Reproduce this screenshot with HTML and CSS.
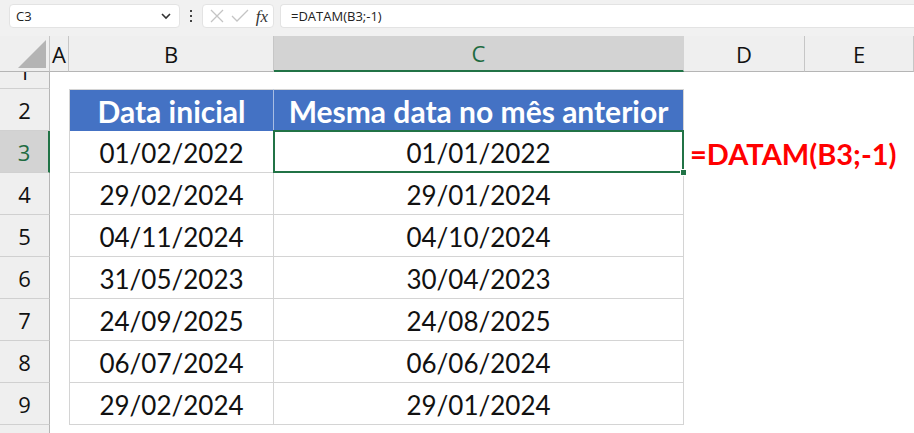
FILE: index.html
```html
<!DOCTYPE html>
<html lang="pt">
<head>
<meta charset="utf-8">
<link rel="stylesheet" href="styles.css">
</head>
<body>
<div class="app">
  <div class="toolbar">
    <div class="namebox">
      <span class="ref">C3</span>
      <svg class="chev" width="12" height="8" viewBox="0 0 12 8"><path d="M2 2 L6 6 L10 2" fill="none" stroke="#333" stroke-width="1.6"/></svg>
    </div>
    <div class="dots"><i></i><i></i><i></i></div>
    <div class="fxbox">
      <svg width="16" height="16" viewBox="0 0 16 16"><path d="M2 2 L14 14 M14 2 L2 14" stroke="#c4c4c4" stroke-width="1.3" fill="none"/></svg>
      <svg width="18" height="16" viewBox="0 0 18 16"><path d="M1 8 L6 13 L17 2" stroke="#c4c4c4" stroke-width="1.3" fill="none"/></svg>
      <span class="fx">fx</span>
    </div>
    <div class="formula">=DATAM(B3;-1)</div>
  </div>
  <div class="sheet">
    <div class="corner"><span class="tri"></span></div>
    <div class="ch">A</div>
    <div class="ch">B</div>
    <div class="ch sel">C</div>
    <div class="ch">D</div>
    <div class="ch">E</div>

    <div class="rh r1"><span>1</span></div>
    <div class="c"></div><div class="c"></div><div class="c"></div><div class="c"></div><div class="c"></div>

    <div class="rh">2</div>
    <div class="c"></div>
    <div class="th first">Data inicial</div>
    <div class="th">Mesma data no mês anterior</div>
    <div class="c"></div><div class="c"></div>

    <div class="rh sel">3</div>
    <div class="c"></div>
    <div class="td first">01/02/2022</div>
    <div class="td active">01/01/2022<span class="selbox"></span><span class="handle"></span></div>
    <div class="c note">=DATAM(B3;-1)</div>
    <div class="c"></div>

    <div class="rh">4</div>
    <div class="c"></div>
    <div class="td first">29/02/2024</div>
    <div class="td">29/01/2024</div>
    <div class="c"></div><div class="c"></div>

    <div class="rh">5</div>
    <div class="c"></div>
    <div class="td first">04/11/2024</div>
    <div class="td">04/10/2024</div>
    <div class="c"></div><div class="c"></div>

    <div class="rh">6</div>
    <div class="c"></div>
    <div class="td first">31/05/2023</div>
    <div class="td">30/04/2023</div>
    <div class="c"></div><div class="c"></div>

    <div class="rh">7</div>
    <div class="c"></div>
    <div class="td first">24/09/2025</div>
    <div class="td">24/08/2025</div>
    <div class="c"></div><div class="c"></div>

    <div class="rh">8</div>
    <div class="c"></div>
    <div class="td first">06/07/2024</div>
    <div class="td">06/06/2024</div>
    <div class="c"></div><div class="c"></div>

    <div class="rh">9</div>
    <div class="c"></div>
    <div class="td first">29/02/2024</div>
    <div class="td">29/01/2024</div>
    <div class="c"></div><div class="c"></div>

    <div class="rh last"></div>
    <div class="c"></div><div class="c"></div><div class="c"></div><div class="c"></div><div class="c"></div>
  </div>
</div>
</body>
</html>
```

FILE: styles.css
```css
* { box-sizing: border-box; }
html, body { margin: 0; padding: 0; }
body {
  width: 914px;
  height: 433px;
  overflow: hidden;
  background: #ffffff;
  font-family: "Open Sans", "DejaVu Sans", sans-serif;
}
.app { display: flex; flex-direction: column; }

.toolbar {
  height: 36px;
  background: #f1f1f1;
  display: flex;
  align-items: flex-start;
  padding: 4px 0 0 9px;
}
.namebox {
  width: 171px;
  height: 24px;
  background: #fff;
  border: 1px solid #e3e3e3;
  border-radius: 4px;
  display: flex;
  align-items: center;
  justify-content: space-between;
  padding: 0 7px 0 6px;
  font-size: 13px;
  color: #222;
}
.dots {
  width: 22px;
  height: 24px;
  display: flex;
  flex-direction: column;
  align-items: center;
  justify-content: center;
  gap: 3px;
}
.dots i { display: block; width: 2px; height: 2px; background: #444; }
.fxbox {
  width: 72px;
  height: 24px;
  background: #fff;
  border: 1px solid #e3e3e3;
  border-radius: 4px;
  display: flex;
  align-items: center;
  justify-content: space-between;
  padding: 0 5px 0 6px;
}
.fx {
  font-family: "Liberation Serif", "DejaVu Serif", serif;
  font-style: italic;
  font-size: 17px;
  color: #333;
  line-height: 1;
}
.formula {
  flex: 1;
  margin-left: 6px;
  height: 24px;
  background: #fff;
  border: 1px solid #e3e3e3;
  border-right: none;
  border-radius: 4px 0 0 4px;
  padding-left: 10px;
  font-size: 13px;
  line-height: 22px;
  color: #222;
}

.sheet {
  display: grid;
  grid-template-columns: 50px 19px 205px 410px 121px 109px;
  grid-template-rows: 36px 17px repeat(8, 42px) 8px;
  background: #fff;
}
.corner {
  background: #efefef;
  border-right: 1px solid #c6c6c6;
  border-bottom: 1px solid #b5b5b5;
  position: relative;
}
.tri {
  position: absolute;
  right: 3px;
  bottom: 3px;
  width: 0;
  height: 0;
  border-left: 28px solid transparent;
  border-bottom: 28px solid #b4b4b4;
}
.ch {
  background: #efefef;
  border-right: 1px solid #c6c6c6;
  border-bottom: 1px solid #b5b5b5;
  display: flex;
  align-items: center;
  justify-content: center;
  font-size: 22px;
  color: #111;
}
.ch.sel {
  background: #d3d3d3;
  color: #1e6b41;
  border-bottom: 2px solid #217346;
  border-right-color: #d3d3d3;
}
.rh {
  background: #efefef;
  border-right: 1px solid #b5b5b5;
  border-bottom: 1px solid #d0d0d0;
  display: flex;
  align-items: center;
  justify-content: center;
  font-size: 22px;
  color: #111;
  overflow: hidden;
}
.rh.r1 { align-items: flex-start; }
.rh.r1 span { display: block; line-height: 22px; margin-top: -12px; }
.rh.sel {
  background: #d3d3d3;
  color: #1e6b41;
  border-right: 2px solid #217346;
}
.rh.last { border-bottom: none; }

.c { background: transparent; }

.th, .td {
  display: flex;
  align-items: center;
  justify-content: center;
  font-family: "Lato", "Open Sans", sans-serif;
  white-space: nowrap;
}
.th {
  background: #4472c4;
  color: #fff;
  font-weight: 700;
  font-size: 30px;
  border-right: 1px solid #a9bde3;
  border-top: 1px solid #d4d4d4;
  padding-top: 1px;
}
.th.first { border-left: 1px solid #d4d4d4; }
.td {
  color: #111;
  font-size: 26px;
  border-right: 1px solid #d4d4d4;
  border-bottom: 1px solid #d4d4d4;
  padding-top: 2px;
}
.td.first { border-left: 1px solid #d4d4d4; }
.th + .th { border-right-color: #d4d4d4; }
.td.active { position: relative; }
.selbox {
  position: absolute;
  left: -1px;
  top: -1px;
  right: -1px;
  bottom: -1px;
  border: 2px solid #217346;
}
.handle {
  position: absolute;
  right: -4px;
  bottom: -4px;
  width: 7px;
  height: 7px;
  background: #217346;
  border: 1px solid #fff;
}
.note {
  display: flex;
  align-items: center;
  padding: 2px 0 0 6px;
  font-family: "Lato", "Open Sans", sans-serif;
  font-weight: 700;
  font-size: 29px;
  color: #ff0000;
  white-space: nowrap;
  overflow: visible;
}
```
